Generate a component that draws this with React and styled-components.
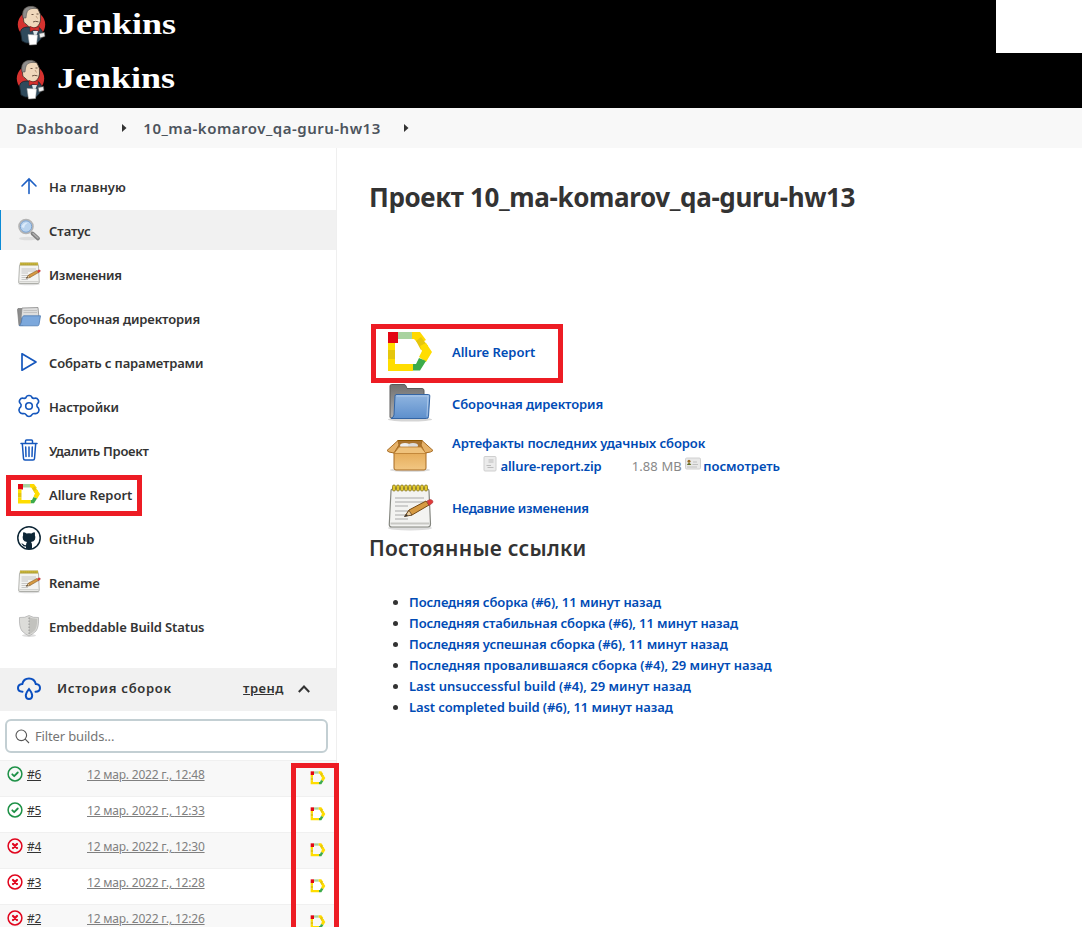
import React from "react";
import styled, { createGlobalStyle } from "styled-components";

const Global = createGlobalStyle`
  * { box-sizing: border-box; }
  body { margin: 0; background: #fff; color: #333; font-family: "Noto Sans", "Open Sans", sans-serif; font-size: 13px; overflow: hidden; }
  svg { display: block; flex: none; }
  a { color: inherit; text-decoration: none; white-space: nowrap; }
`;

const Page = styled.div`
  position: relative;
  width: 1082px;
  height: 927px;
  overflow: hidden;
  display: flex;
  flex-direction: column;
`;
const Header = styled.header`
  height: 108px;
  background: #000;
  flex: none;
`;
const Bar = styled.div`
  height: 54px;
  padding-left: ${(p) => p.$pad}px;
  display: flex;
  align-items: flex-start;
`;
const Brand = styled.div`
  display: flex;
  align-items: flex-start;
  gap: 11px;
  padding-top: 5px;
  flex: 1;
`;
const BrandName = styled.span`
  font: bold 30px/38px "Liberation Serif", serif;
  color: #fff;
  transform: scaleX(1.2);
  transform-origin: left center;
`;
const Blank = styled.div`
  width: 86px;
  height: 53px;
  background: #fff;
`;
const Crumbs = styled.nav`
  height: 40px;
  flex: none;
  background: #f8f8f8;
  display: flex;
  align-items: center;
  padding-left: 16px;
  color: #4d545d;
  font-size: 15px;
  font-weight: 600;
  line-height: 40px;
  svg { margin: 0 16px 0 23px; }
`;
const CrumbText = styled.a`
  letter-spacing: ${(p) => p.$ls}px;
`;
const Body = styled.div`
  display: flex;
  flex: 1;
  min-height: 0;
`;
const Side = styled.aside`
  width: 337px;
  flex: none;
  border-right: 1px solid #efefef;
  padding-top: 18px;
`;
const Task = styled.a`
  display: flex;
  align-items: center;
  height: 40px;
  margin-bottom: 4px;
  padding-left: 16px;
  border-left: 1px solid ${(p) => (p.$active ? "#0b8bd6" : "transparent")};
  background: ${(p) => (p.$active ? "#f1f1f1" : "transparent")};
  font-weight: 600;
  font-size: 13px;
  line-height: 18px;
  svg { margin-right: 8px; }
  span { padding-top: 2px; letter-spacing: ${(p) => p.$ls || 0}px; }
`;
const HistoryHead = styled.div`
  margin-top: 22px;
  height: 43px;
  background: #f1f1f1;
  display: flex;
  align-items: center;
  padding: 0 26px 3px 16px;
  font-weight: 600;
  svg { margin-top: 2px; }
`;
const HistoryTitle = styled.span`
  margin-left: 15px;
  flex: 1;
  letter-spacing: ${(p) => p.$ls}px;
`;
const Trend = styled.a`
  text-decoration: underline;
  letter-spacing: 0.5px;
  margin-right: 14px;
`;
const Filter = styled.div`
  margin: 8px 8px 7px 5px;
  height: 34px;
  border: 2px solid #c3cfd3;
  border-radius: 6px;
  display: flex;
  align-items: center;
  padding-left: 8px;
  gap: 5px;
  color: #757575;
  font-size: 13px;
  letter-spacing: -0.15px;
`;
const Build = styled.div`
  height: 36px;
  border-top: 1px solid #f0f0f0;
  background: ${(p) => (p.$odd ? "#fff" : "#f8f8f8")};
  display: flex;
  align-items: flex-start;
  padding: 5px 10px 0 7px;
`;
const BuildNo = styled.a`
  font-size: 12px;
  line-height: 18px;
  width: 60px;
  margin-left: 4px;
  text-decoration: underline;
  letter-spacing: -0.3px;
`;
const BuildDate = styled.a`
  font-size: 12px;
  line-height: 18px;
  color: #808080;
  text-decoration: underline;
  flex: 1;
  letter-spacing: ${(p) => p.$ls}px;
`;
const BuildIcon = styled.span`
  padding-top: 4px;
`;
const Main = styled.main`
  padding: 32px 0 0 33px;
`;
const Title = styled.h1`
  margin: 0 0 112px -1px;
  font-size: 26px;
  line-height: 34px;
  font-weight: 700;
  letter-spacing: ${(p) => p.$ls}px;
  white-space: nowrap;
`;
const Row = styled.div`
  display: flex;
  align-items: center;
  height: 52px;
  padding-left: 16px;
  color: #004bb5;
  font-weight: 600;
`;
const RowIcon = styled.span`
  width: 48px;
  height: 48px;
  margin-right: 18px;
`;
const Artifacts = styled.div`
  display: flex;
  flex-direction: column;
  line-height: 23px;
  padding-bottom: 2px;
`;
const FileLine = styled.div`
  display: flex;
  align-items: center;
  padding-left: 30px;
  svg { margin: 0 -1px 6px 0; }
`;
const LinkText = styled.a`
  letter-spacing: ${(p) => p.$ls || 0}px;
`;
const Size = styled.span`
  color: #888;
  font-weight: 400;
  margin: 0 3px 0 30px;
  letter-spacing: 0.1px;
  white-space: nowrap;
`;
const Subtitle = styled.h2`
  margin: 0 0 30px -1px;
  font-size: 21px;
  line-height: 28px;
  font-weight: 600;
  letter-spacing: ${(p) => p.$ls}px;
`;
const Links = styled.ul`
  margin: 0;
  padding-left: 39px;
  li { line-height: 21px; font-size: 13px; }
  a { color: #004bb5; font-weight: 600; }
`;
const Mark = styled.div`
  position: absolute;
  left: ${(p) => p.$x}px;
  top: ${(p) => p.$y}px;
  width: ${(p) => p.$w}px;
  height: ${(p) => p.$h}px;
  border: 5px solid #ed1c24;
`;

const Butler = () => (
  <svg width="30" height="41" viewBox="0 0 30 41">
    <ellipse cx="14.500" cy="19.500" rx="13.700" ry="13.500" fill="#d6322f" />
    <path d="M5 36 L3.500 27 Q4 22.500 10 22 L20 22 Q25 23 26 29 L24 34 L20 38 H9Z" fill="#2f4a5c" stroke="#16222b" strokeWidth=".8" />
    <path d="M6.500 14 Q4 5 9.500 2.500 Q16 -.5 21 4 Q24.500 9 23.500 15 Q22.500 22 17 23 Q11 22.500 9 19 Q6 18 6.500 14Z" fill="#f0d8bb" stroke="#3a3029" strokeWidth=".8" />
    <path d="M6 13 Q4.500 4.500 10 2 Q16 0 20 3.500 Q14 3 12 4.500 Q10 6 9.500 9 L9 13Z" fill="#8f8d8b" stroke="#444" strokeWidth=".5" />
    <path d="M14.500 9.500H16.500M19.500 9H21.500M16 17Q18 15.800 21.500 16.800" stroke="#5d4738" strokeWidth=".9" fill="none" />
    <path d="M19 11 L20.500 13.500" stroke="#b28f70" strokeWidth=".8" fill="none" />
    <path d="M13 21.500 L17 23 L22 21.500 L22 26 L17 25 L13 26.500Z" fill="#d6322f" stroke="#7c1616" strokeWidth=".5" />
    <path d="M16 26 L21 26 L19.500 30 L17 30Z" fill="#dce5e8" />
    <path d="M22 28.500 L27.500 27.500 L28 31.500 L23 33Z" fill="#eee" stroke="#555" strokeWidth=".6" />
    <path d="M11 29.500 L20.500 30 L19.500 39.500 L12.500 40Z" fill="#fff" stroke="#aaa" strokeWidth=".5" />
  </svg>
);
const CrumbArrow = () => (
  <svg width="5" height="8" viewBox="0 0 5 8"><path d="M0 0 L4.5 4 L0 8Z" fill="#333" /></svg>
);
const Up = () => (
  <svg width="24" height="24" viewBox="0 0 24 24" fill="none" stroke="#1d5fc4" strokeWidth="1.6" strokeLinecap="round"><path d="M12 19.5V5M5 12l7-7 7 7" /></svg>
);
const Magnifier = () => (
  <svg width="24" height="24" viewBox="0 0 24 24">
    <ellipse cx="11" cy="20.5" rx="9" ry="1.8" fill="#ddd" />
    <path d="M15.500 15.500 L21 20.500" stroke="#808080" strokeWidth="3.800" strokeLinecap="round" />
    <path d="M16 15.500 L21 20" stroke="#b0b0b0" strokeWidth="1.500" strokeLinecap="round" />
    <circle cx="9" cy="8.500" r="6.900" fill="#b9d3ee" stroke="#b4b4b4" strokeWidth="1.800" />
    <circle cx="9" cy="8.500" r="5.700" fill="none" stroke="#6d98cc" strokeWidth=".8" />
    <path d="M4.500 9 Q6 4 11 4.500 Q8 6 7 10Z" fill="#dcebfa" />
  </svg>
);
const Notepad = ({ size = 24 }) => (
  <svg width={size} height={size} viewBox="0 0 48 48">
    <ellipse cx="24" cy="44" rx="22" ry="2.5" fill="#ddd" />
    <path d="M7 5 H41 Q43 5 43 7 L44.5 40 Q44.500 43 42 43 H6 Q3 43 3.300 40 L5 7 Q5 5 7 5Z" fill="#f3f3f1" stroke="#858780" strokeWidth="1.2" />
    <path d="M4.500 39.500H43.500" stroke="#c8c8c4" strokeWidth="2" />
    <path d="M9 14H38M9 18H38M9 22H22M9 27H27M9 31H24M9 35H22" stroke="#aaa" strokeWidth="1.2" />
    {[8, 12, 16, 20, 24, 28, 32, 36, 40].map((x) => (
      <rect key={x} x={x - 1.5} y="1" width="3" height="6" rx="1.400" fill="#e2c92a" stroke="#85741a" strokeWidth=".8" />
    ))}
    <path d="M19 32 L23 26 L40 17 L43 21 L26 31Z" fill="#d69a42" stroke="#754914" strokeWidth="1" />
    <path d="M18.500 32.500 L23 26.500 L26 31Z" fill="#eed0a0" stroke="#55361a" strokeWidth=".7" />
    <path d="M18 33 L20.500 30 L22 31.500Z" fill="#333" />
    <path d="M41 17 L44 15.500 Q48 16 46.500 19 L43 21.500Z" fill="#e03b3b" stroke="#a33" strokeWidth=".6" />
  </svg>
);
const OpenFolder = () => (
  <svg width="24" height="24" viewBox="0 0 24 24">
    <path d="M.5 3.500 L1 2.500H5L6 19.500H2Z" fill="#8c8c8c" stroke="#777" strokeWidth=".7" />
    <path d="M5 2 L21 1.500 L22 12 H4Z" fill="#dedede" stroke="#8a8a8a" strokeWidth=".8" />
    <path d="M6.500 4.500H20M6.500 6.500H20" stroke="#bbb" strokeWidth=".8" />
    <path d="M6.500 9.800 H23.500 L22 18.500 Q21.700 19.800 20.500 19.800 H2.500 Q4.500 18 5.200 11.500Z" fill="#7ca8dc" stroke="#4c7ab3" strokeWidth=".8" />
  </svg>
);
const Play = () => (
  <svg width="24" height="24" viewBox="0 0 24 24" fill="none" stroke="#1557bd" strokeWidth="1.700" strokeLinejoin="round"><path d="M5 3.800V20.200L19 12Z" /></svg>
);
const Gear = () => (
  <svg width="24" height="24" viewBox="0 0 24 24" fill="none" stroke="#1557bd" strokeWidth="1.600" strokeLinejoin="round">
    <path d="M9 3.600Q9.500 1.500 12 1.500T15 3.600Q16 4.700 17.600 4.200Q20 3.700 21.200 5.800Q22.300 8 20.700 9.400Q19.400 10.500 20 12.200Q20.400 13.300 21.500 14.200Q22.700 16 21.400 18Q20 20 17.700 19.600Q15.800 19.200 15 20.700Q14.100 22.500 12 22.500T9 20.700Q8.200 19.200 6.300 19.600Q4 20 2.600 18Q1.300 16 2.500 14.200Q3.600 13.300 4 12.200Q4.600 10.500 3.300 9.400Q1.700 8 2.800 5.800Q4 3.700 6.400 4.200Q8 4.700 9 3.600Z" />
    <circle cx="12" cy="12" r="3.300" />
  </svg>
);
const Trash = () => (
  <svg width="24" height="24" viewBox="0 0 24 24" fill="none" stroke="#1557bd" strokeWidth="1.500" strokeLinejoin="round" strokeLinecap="round">
    <path d="M4 5.500H20M5.300 5.500L6.500 20.500Q6.600 22 8 22H16Q17.400 22 17.500 20.500L18.700 5.500M8.500 5.500V3Q8.500 2 9.500 2H14.500Q15.500 2 15.500 3V5.500M8.700 9L9 18.500M12 9V18.500M15.300 9L15 18.500" />
  </svg>
);
const Allure = ({ size = 24 }) => (
  <svg width={size} height={size} viewBox="0 0 48 48">
    <path d="M2 4H12V15H2Z" fill="#e30613" />
    <path d="M12 4H26V11H12Z" fill="#a8d3a0" />
    <path d="M26 4H34L40 12L33 16L28 11H26Z" fill="#ffd900" />
    <path d="M35 9L42 18L35 22L30 13Z" fill="#e5c60c" />
    <path d="M40 15L46 24L40 34L33 29L36 23L34 18Z" fill="#ffdd00" />
    <path d="M33 30L40 33L34 42.500H27V36H30Z" fill="#3cab4a" />
    <path d="M2 31H9V36H27V43H2Z" fill="#ffdd00" />
    <path d="M2 15H9V22H2Z" fill="#ffdd00" />
    <path d="M2 22H9V31H2Z" fill="#e5c60c" />
  </svg>
);
const Github = () => (
  <svg width="24" height="24" viewBox="0 0 24 24">
    <circle cx="12" cy="12" r="11.200" fill="#fff" stroke="#0d2636" strokeWidth="1.500" />
    <path d="M6.300 6.300Q8 6.300 9.500 7.500Q12 7 14.500 7.500Q16 6.300 17.700 6.300Q18.200 8 17.900 9.200Q19 11.500 18 13.500Q17 15.500 14 16Q15 17 15 19V22.700Q12 23.500 9 22.700V20.500Q6.500 21 5.500 19L4.200 17.500Q5.500 17 6.700 18.500Q7.700 19.700 9 19Q9.200 17 10 16Q7 15.500 6 13.500Q5 11.500 6.100 9.200Q5.800 8 6.300 6.300Z" fill="#0d2636" />
  </svg>
);
const Shield = () => (
  <svg width="24" height="24" viewBox="0 0 24 24">
    <ellipse cx="12" cy="21.500" rx="7" ry="1.500" fill="#ddd" />
    <path d="M12 1.500Q16 4 21.500 3.500Q22 13 19 17Q16 20 12 22Q8 20 5 17Q2 13 2.500 3.500Q8 4 12 1.500Z" fill="#dcdcd9" stroke="#aaa" strokeWidth=".7" />
    <path d="M12 3Q15 5 20.200 4.800Q20.200 13 18 16.200Q15 19 12 20.500Z" fill="#c2c2be" />
    <path d="M12 3.500V20" stroke="#888" strokeWidth=".8" strokeDasharray="1.500 1.500" />
  </svg>
);
const Cloud = () => (
  <svg width="26" height="24" viewBox="0 0 26 24" fill="none" stroke="#0b4fc0" strokeWidth="2" strokeLinecap="round">
    <path d="M6.500 14.800Q2 14.500 2 11T6.300 7Q7.500 1.500 13 1.500T19.800 7Q24 7.300 24 11T19.500 14.800" />
    <path d="M13 12Q9.800 16 9.800 18.700Q10 22 13 22T16.200 18.700Q16.200 16 13 12Z" />
  </svg>
);
const Chevron = () => (
  <svg width="12" height="8" viewBox="0 0 12 8" fill="none" stroke="#333" strokeWidth="2"><path d="M.8 7L6 1.500L11.200 7" /></svg>
);
const Search = () => (
  <svg width="15" height="15" viewBox="0 0 15 15" fill="none" stroke="#555" strokeWidth="1.100"><circle cx="6.300" cy="6.300" r="5.300" /><path d="M10.200 10.200L14 14" /></svg>
);
const Status = ({ ok }) => (
  <svg width="16" height="16" viewBox="0 0 16 16" fill="none" stroke={ok ? "#1e9147" : "#e1061e"} strokeLinecap="round" strokeLinejoin="round">
    <circle cx="8" cy="8" r="6.900" strokeWidth="1.500" />
    {ok ? <path d="M5.300 8.300L7.200 10.200L10.800 6.500" strokeWidth="1.800" /> : <path d="M6 6L10 10M10 6L6 10" strokeWidth="2.200" />}
  </svg>
);
const Folder = () => (
  <svg width="48" height="48" viewBox="0 0 48 48">
    <defs>
      <linearGradient id="ff" x1="0" y1="0" x2="0" y2="1"><stop offset="0" stopColor="#90b5e0" /><stop offset="1" stopColor="#5d8fcc" /></linearGradient>
      <linearGradient id="fb" x1="0" y1="0" x2="0" y2="1"><stop offset="0" stopColor="#707070" /><stop offset="1" stopColor="#b0b0b0" /></linearGradient>
    </defs>
    <ellipse cx="24" cy="39.500" rx="22" ry="2" fill="#d5d5d5" />
    <path d="M4 37V6Q4 4.500 5.500 4.500H18Q19.500 4.500 20 6L21 8.500H36Q38 8.500 38 10.500V38H5Q4 38 4 37Z" fill="url(#fb)" stroke="#5a5a5a" />
    <path d="M10 14.500H42.500Q44 14.500 43.800 16L42.500 36.500Q42.500 38.500 40.500 38.500H5Q7.500 37.500 8 35L9 16.500Q9 14.500 10 14.500Z" fill="url(#ff)" stroke="#3465a4" />
    <path d="M10.500 16H42L41 36.500" fill="none" stroke="#b9d1ee" strokeWidth=".8" />
  </svg>
);
const Box = () => (
  <svg width="48" height="48" viewBox="0 0 48 48">
    <defs><linearGradient id="bx" x1="0" y1="0" x2="0" y2="1"><stop offset="0" stopColor="#e5ab58" /><stop offset="1" stopColor="#f2c783" /></linearGradient></defs>
    <ellipse cx="24" cy="38" rx="20" ry="2" fill="#ddd" />
    <path d="M12 8.500H36L40 21H8Z" fill="#a9732f" stroke="#8f5902" />
    <ellipse cx="19" cy="13.500" rx="5" ry="2.600" fill="#eee" /><ellipse cx="27" cy="13.500" rx="5" ry="2.600" fill="#ddd" />
    <path d="M8 20H40V36Q40 38 38 38H10Q8 38 8 36Z" fill="url(#bx)" stroke="#a76b22" />
    <path d="M12 8.500L1 18.500L3 20L8 21L13 13ZM36 8.500L47 18.500L44.500 20L39 21L35 13Z" fill="#e6b269" stroke="#a76b22" strokeLinejoin="round" />
    <path d="M13 15H35L40 21.500H8Z" fill="#efc27c" stroke="#b97c2e" strokeWidth=".8" />
  </svg>
);
const Doc = () => (
  <svg width="16" height="16" viewBox="0 0 16 16"><rect x="2" y=".5" width="12" height="14.500" rx="1" fill="#ebebeb" stroke="#cfcfcf" /><path d="M6.500 4H11.500M6.500 6H11.500M4.500 9.500H9M5.500 11.500H11.500" stroke="#bcbcbc" strokeWidth="1.200" /></svg>
);
const Card = () => (
  <svg width="16" height="16" viewBox="0 0 16 16"><rect x=".5" y="2" width="15" height="11" rx="1.200" fill="#e8e8e8" stroke="#d0d0d0" /><circle cx="4" cy="5.200" r="1.500" fill="#986a22" /><path d="M1.800 9Q4 5 6.400 9Z" fill="#5f6d24" /><path d="M8 6H12M7.500 8.500H13M2 11H12" stroke="#c0c0c0" /></svg>
);

const tasks = [
  ["На главную", Up, 0.13], ["Статус", Magnifier, -0.05], ["Изменения", Notepad, -0.24], ["Сборочная директория", OpenFolder, -0.13],
  ["Собрать с параметрами", Play, -0.15], ["Настройки", Gear, -0.15], ["Удалить Проект", Trash, -0.28], ["Allure Report", Allure, -0.04],
  ["GitHub", Github, 0.15], ["Rename", Notepad, -0.2], ["Embeddable Build Status", Shield, -0.11],
];
const builds = [["#6", "12:48", true], ["#5", "12:33", true], ["#4", "12:30", false], ["#3", "12:28", false], ["#2", "12:26", false]];
const links = [
  ["Последняя сборка (#6), 11 минут назад", -0.1],
  ["Последняя стабильная сборка (#6), 11 минут назад", -0.13],
  ["Последняя успешная сборка (#6), 11 минут назад", -0.11],
  ["Последняя провалившаяся сборка (#4), 29 минут назад", -0.03],
  ["Last unsuccessful build (#4), 29 минут назад", 0],
  ["Last completed build (#6), 11 минут назад", -0.1],
];

export default function App() {
  return (
    <Page>
      <Global />
      <Header>
        <Bar $pad={17}><Brand><Butler /><BrandName>Jenkins</BrandName></Brand><Blank /></Bar>
        <Bar $pad={16}><Brand><Butler /><BrandName>Jenkins</BrandName></Brand></Bar>
      </Header>
      <Crumbs>
        <CrumbText $ls={0.4}>Dashboard</CrumbText><CrumbArrow />
        <CrumbText $ls={0.5}>10_ma-komarov_qa-guru-hw13</CrumbText><CrumbArrow />
      </Crumbs>
      <Body>
        <Side>
          {tasks.map(([name, Icon, ls], i) => (
            <Task key={name} $active={i === 1} $ls={ls}><Icon /><span>{name}</span></Task>
          ))}
          <HistoryHead>
            <Cloud /><HistoryTitle $ls={0.7}>История сборок</HistoryTitle><Trend>тренд</Trend><Chevron />
          </HistoryHead>
          <Filter><Search />Filter builds...</Filter>
          {builds.map(([no, time, ok], i) => (
            <Build key={no} $odd={i % 2 === 1}>
              <Status ok={ok} /><BuildNo>{no}</BuildNo><BuildDate $ls={-0.2}>12 мар. 2022 г., {time}</BuildDate>
              <BuildIcon><Allure size={16} /></BuildIcon>
            </Build>
          ))}
        </Side>
        <Main>
          <Title $ls={-0.37}>Проект 10_ma-komarov_qa-guru-hw13</Title>
          <Row><RowIcon><Allure size={48} /></RowIcon><LinkText $ls={-0.04}>Allure Report</LinkText></Row>
          <Row><RowIcon><Folder /></RowIcon><LinkText $ls={-0.13}>Сборочная директория</LinkText></Row>
          <Row>
            <RowIcon><Box /></RowIcon>
            <Artifacts>
              <LinkText $ls={-0.07}>Артефакты последних удачных сборок</LinkText>
              <FileLine><Doc />&nbsp;<LinkText $ls={-0.05}>allure-report.zip</LinkText><Size>1.88 MB</Size><Card />&nbsp;<LinkText>посмотреть</LinkText></FileLine>
            </Artifacts>
          </Row>
          <Row><RowIcon><Notepad size={48} /></RowIcon><LinkText $ls={-0.26}>Недавние изменения</LinkText></Row>
          <Subtitle $ls={0.25}>Постоянные ссылки</Subtitle>
          <Links>{links.map(([t, ls]) => <li key={t}><LinkText $ls={ls}>{t}</LinkText></li>)}</Links>
        </Main>
      </Body>
      <Mark $x={6} $y={475} $w={136} $h={41} />
      <Mark $x={371} $y={324} $w={192} $h={59} />
      <Mark $x={291} $y={763} $w={48} $h={180} />
    </Page>
  );
}
